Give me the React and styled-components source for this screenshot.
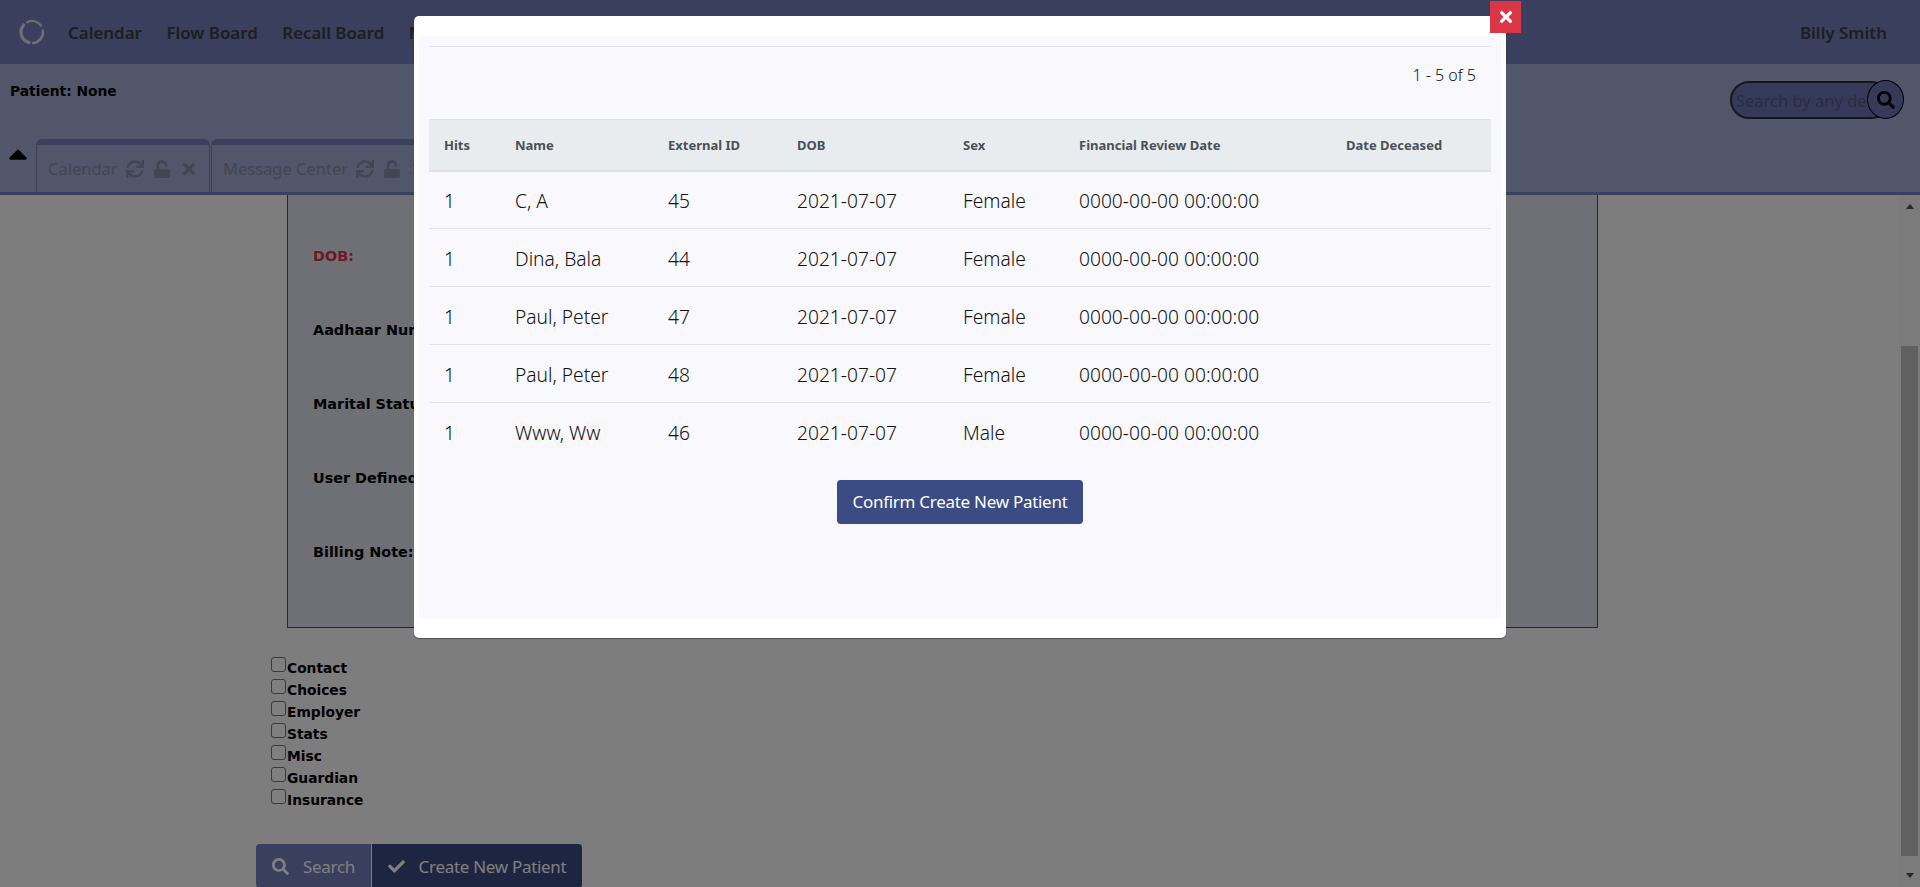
import React from "react";
import styled, { createGlobalStyle } from "styled-components";
import { FaCaretUp, FaCheck, FaSearch, FaSync, FaTimes, FaUnlock } from "react-icons/fa";

const GlobalStyle = createGlobalStyle`
  html, body {
    margin: 0;
    height: 100%;
    overflow: hidden;
    background: #fafafc;
    font-family: "Noto Sans", "Open Sans", sans-serif;
  }
  * {
    box-sizing: border-box;
  }
`;

const Page = styled.div`
  height: 887px;
  display: flex;
  flex-direction: column;
`;

const NavBar = styled.nav`
  height: 64px;
  flex: none;
  display: flex;
  align-items: center;
  background: #727eb8;
  padding: 0 33px 0 19px;
`;

const Logo = styled.svg`
  width: 26px;
  height: 26px;
  margin-right: 23px;
`;

const NavItem = styled.a`
  font-size: 16.9px;
  font-weight: 600;
  color: #3c3c3c;
  margin-right: 24.5px;
  white-space: nowrap;
`;

const UserName = styled(NavItem)`
  margin: 0 0 0 auto;
`;

const SubHeader = styled.div`
  height: 131px;
  flex: none;
  background: #a4acd4;
  border-bottom: 3px solid #7782bb;
  display: flex;
  flex-direction: column;
  position: relative;
`;

const PatientRow = styled.div`
  height: 76px;
  padding: 19px 0 0 10px;
  display: flex;
  justify-content: space-between;
`;

const BoldLabel = styled.div`
  font-family: "DejaVu Sans", Verdana, sans-serif;
  font-size: 13.8px;
  font-weight: 700;
  color: #000;
  white-space: nowrap;
`;

const FieldLabel = styled(BoldLabel)`
  font-size: 14.4px;
  color: ${(p) => (p.$required ? "#dc3545" : "#000")};
`;

const SearchBox = styled.div`
  width: 174px;
  height: 39px;
  margin: -3px 16px 0 0;
  display: flex;
  position: relative;
`;

const SearchInput = styled.input`
  width: 160px;
  height: 38px;
  margin-top: 1px;
  border-radius: 20px;
  border: 2px solid #2e2e2e;
  background: #6a74b6;
  padding: 0 0 0 4px;
  font: 16.5px "Noto Sans", sans-serif;
  &::placeholder {
    color: #555a82;
    opacity: 1;
  }
`;

const SearchButton = styled.button`
  position: absolute;
  right: 0;
  top: 0;
  width: 37px;
  height: 39px;
  border-radius: 50%;
  border: 1px solid #000;
  background: #6a74b6;
  display: flex;
  align-items: center;
  justify-content: center;
  padding: 0;
  font-size: 18px;
  color: #000;
`;

const TabRow = styled.div`
  display: flex;
  align-items: flex-start;
  padding-left: 7px;
`;

const Collapse = styled(FaCaretUp)`
  width: 22px;
  height: 30px;
  margin: 0 7px 0 0;
  color: #000;
`;

const Tab = styled.div`
  height: 53px;
  width: ${(p) => p.$width}px;
  margin-right: 1px;
  flex: none;
  border-top: 6px solid #7782bb;
  border-left: 1px solid #7782bb;
  border-right: 1px solid #7782bb;
  border-radius: 6px 6px 0 0;
  display: flex;
  align-items: center;
  padding: 0 0 0 11px;
  color: #848aa5;
  font-size: 16.5px;
  white-space: nowrap;
`;

const TabIcons = styled.span`
  display: flex;
  align-items: center;
  gap: 9px;
  margin-left: 8px;
  font-size: 18px;
`;

const Main = styled.div`
  flex: 1;
  display: flex;
  min-height: 0;
`;

const Form = styled.div`
  flex: 1;
  padding-left: 256px;
`;

const FormPanel = styled.div`
  margin-left: 31px;
  width: 1311px;
  height: 433px;
  background: #dee0ea;
  border: 1px solid #464e78;
  border-top: none;
  display: flex;
  flex-direction: column;
  gap: 57.9px;
  padding: 53px 0 0 25px;
`;

const Checks = styled.div`
  margin: 28px 0 0 15px;
`;

const CheckRow = styled.label`
  height: 22px;
  display: flex;
  align-items: flex-start;
`;

const CheckBox = styled.input`
  width: 15px;
  height: 15px;
  margin: 1px 1px 0 0;
  appearance: none;
  background: #fff;
  border: 1px solid #777;
  border-radius: 3px;
`;

const CheckText = styled(BoldLabel)`
  padding-top: 4px;
`;

const FormButtons = styled.div`
  display: flex;
  margin-top: 34px;
`;

const FormButton = styled.button`
  height: 44px;
  width: ${(p) => p.$width}px;
  border: none;
  border-right: 1px solid #fff;
  border-radius: ${(p) => p.$radius};
  background: ${(p) => p.$bg};
  color: #fff;
  font: 17px "Noto Sans", sans-serif;
  letter-spacing: -0.3px;
  display: flex;
  align-items: center;
  justify-content: center;
  gap: 14px;
  padding: 0;
  white-space: nowrap;
`;

const ScrollTrack = styled.div`
  width: 21px;
  flex: none;
  background: #f6f6f6;
  display: flex;
  flex-direction: column;
  align-items: center;
  padding-top: 9px;
`;

const Arrow = styled.div`
  width: 0;
  height: 0;
  border-left: 4.5px solid transparent;
  border-right: 4.5px solid transparent;
  ${(p) => (p.$down ? "border-top: 5px solid #505050;" : "border-bottom: 5px solid #505050;")}
`;

const ScrollThumb = styled.div`
  width: 17px;
  height: 510px;
  margin: 137px 0 17px;
  background: #c1c1c1;
`;

const Overlay = styled.div`
  position: fixed;
  inset: 0;
  background: rgba(0, 0, 0, 0.5);
`;

const Modal = styled.div`
  position: relative;
  width: 1092px;
  height: 622px;
  margin: 16px 0 0 414px;
  background: #fff;
  box-shadow: 0 1px 1px rgba(0, 0, 0, 0.35);
  border-radius: 5px;
  padding: 20px 5px;
`;

const CloseButton = styled.button`
  position: absolute;
  top: -15px;
  right: -15px;
  width: 31px;
  height: 32px;
  border: none;
  background: #dc3545;
  color: #fff;
  font-size: 18px;
  display: flex;
  align-items: center;
  justify-content: center;
  padding: 0;
`;

const ModalBody = styled.div`
  height: 582px;
  background: #f8f8fd;
  padding: 10px 10px 0;
`;

const TopRule = styled.div`
  border-top: 1px solid #e2e3e8;
`;

const Count = styled.div`
  height: 72px;
  padding: 17px 15px 0 0;
  text-align: right;
  font-size: 16px;
  font-weight: 300;
  line-height: 22px;
  color: #111;
`;

const Table = styled.table`
  width: 1062px;
  table-layout: fixed;
  border-collapse: collapse;
`;

const HeadCell = styled.th`
  height: 51px;
  width: ${(p) => p.$width}px;
  padding: 0 0 0 15px;
  text-align: left;
  font-size: 13px;
  font-weight: 700;
  color: #495057;
  background: #e9ecef;
  border-top: 1px solid #dee2e6;
  border-bottom: 2px solid #dee2e6;
`;

const Row = styled.tr`
  border-bottom: 1px solid #e2e3e8;
  &:last-child {
    border-bottom: none;
  }
`;

const Cell = styled.td`
  height: 58px;
  padding: 2px 0 0 15px;
  font-size: 19.2px;
  font-weight: 300;
  color: #111;
  white-space: nowrap;
`;

const ConfirmRow = styled.div`
  display: flex;
  justify-content: center;
  padding-top: 19px;
`;

const ConfirmButton = styled.button`
  width: 246px;
  height: 44px;
  border: none;
  border-radius: 4px;
  background: #3b4b83;
  color: #fff;
  font: 17px "Noto Sans", sans-serif;
  letter-spacing: -0.28px;
  padding: 0;
`;

const columns = [
  ["Hits", 71],
  ["Name", 153],
  ["External ID", 129],
  ["DOB", 166],
  ["Sex", 116],
  ["Financial Review Date", 267],
  ["Date Deceased", 160],
];

const patients = [
  ["C, A", "45", "Female"],
  ["Dina, Bala", "44", "Female"],
  ["Paul, Peter", "47", "Female"],
  ["Paul, Peter", "48", "Female"],
  ["Www, Ww", "46", "Male"],
];

const formLabels = ["Aadhaar Number:", "Marital Status:", "User Defined:", "Billing Note:"];
const sections = ["Contact", "Choices", "Employer", "Stats", "Misc", "Guardian", "Insurance"];

const App = () => {
  return (
    <>
      <GlobalStyle />
      <Page>
        <NavBar>
          <Logo viewBox="0 0 26 26" fill="none" stroke="#fff" strokeOpacity="0.75" strokeLinecap="round">
            <path d="M4.6 6A11 11 0 0 0 10 23.6" strokeWidth="3.2" />
            <path d="M8 3.2A11 11 0 0 1 22 6.5" strokeWidth="2.2" />
            <path d="M23.9 11.5A11 11 0 0 1 14 24" strokeWidth="2.6" />
          </Logo>
          <NavItem>Calendar</NavItem>
          <NavItem>Flow Board</NavItem>
          <NavItem>Recall Board</NavItem>
          <NavItem>Messages</NavItem>
          <UserName>Billy Smith</UserName>
        </NavBar>
        <SubHeader>
          <PatientRow>
            <BoldLabel>Patient: None</BoldLabel>
            <SearchBox>
              <SearchInput placeholder="Search by any demographics" />
              <SearchButton>
                <FaSearch />
              </SearchButton>
            </SearchBox>
          </PatientRow>
          <TabRow>
            <Collapse />
            <Tab $width={174}>
              Calendar
              <TabIcons>
                <FaSync />
                <FaUnlock />
                <FaTimes />
              </TabIcons>
            </Tab>
            <Tab $width={230}>
              Message Center
              <TabIcons>
                <FaSync />
                <FaUnlock />
                <FaTimes />
              </TabIcons>
            </Tab>
          </TabRow>
        </SubHeader>
        <Main>
          <Form>
            <FormPanel>
              <FieldLabel $required>DOB:</FieldLabel>
              {formLabels.map((label) => (
                <FieldLabel key={label}>{label}</FieldLabel>
              ))}
            </FormPanel>
            <Checks>
              {sections.map((name) => (
                <CheckRow key={name}>
                  <CheckBox type="checkbox" />
                  <CheckText>{name}</CheckText>
                </CheckRow>
              ))}
            </Checks>
            <FormButtons>
              <FormButton $width={116} $bg="#727eb8" $radius="4px 0 0 4px">
                <FaSearch />
                Search
              </FormButton>
              <FormButton $width={211} $bg="#3b4b83" $radius="0 4px 4px 0">
                <FaCheck />
                Create New Patient
              </FormButton>
            </FormButtons>
          </Form>
          <ScrollTrack>
            <Arrow />
            <ScrollThumb />
            <Arrow $down />
          </ScrollTrack>
        </Main>
      </Page>
      <Overlay>
        <Modal>
          <CloseButton>
            <FaTimes />
          </CloseButton>
          <ModalBody>
            <TopRule />
            <Count>1 - 5 of 5</Count>
            <Table>
              <thead>
                <tr>
                  {columns.map(([title, width]) => (
                    <HeadCell key={title} $width={width}>
                      {title}
                    </HeadCell>
                  ))}
                </tr>
              </thead>
              <tbody>
                {patients.map(([name, id, sex]) => (
                  <Row key={id}>
                    <Cell>1</Cell>
                    <Cell>{name}</Cell>
                    <Cell>{id}</Cell>
                    <Cell>2021-07-07</Cell>
                    <Cell>{sex}</Cell>
                    <Cell>0000-00-00 00:00:00</Cell>
                    <Cell />
                  </Row>
                ))}
              </tbody>
            </Table>
            <ConfirmRow>
              <ConfirmButton>Confirm Create New Patient</ConfirmButton>
            </ConfirmRow>
          </ModalBody>
        </Modal>
      </Overlay>
    </>
  );
};

export default App;
